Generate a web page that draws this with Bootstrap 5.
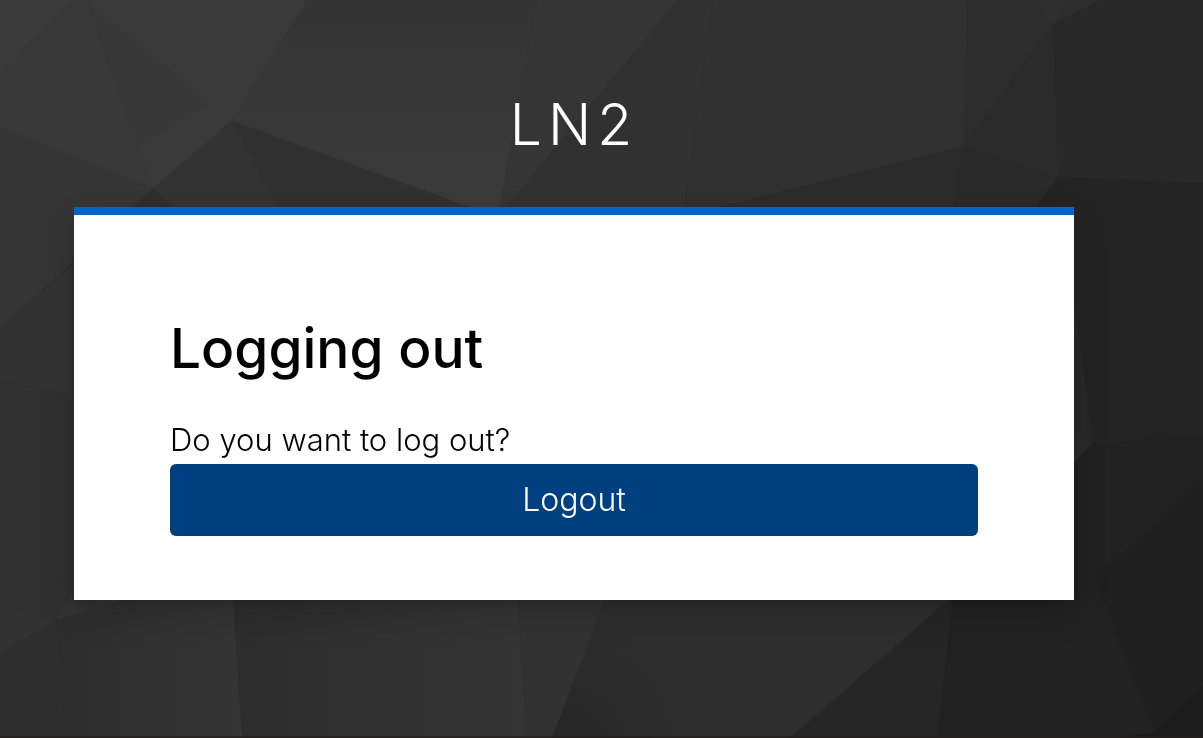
<!DOCTYPE html>
<html lang="en">
<head>
<meta charset="utf-8">
<meta name="viewport" content="width=device-width, initial-scale=1">
<title>Logging out</title>
<link href="https://cdn.jsdelivr.net/npm/bootstrap@5.3.0/dist/css/bootstrap.min.css" rel="stylesheet">
<style>
  body { background: #2a2a2a; font-family: Inter, "Open Sans", sans-serif; }
  .backdrop { z-index: -1; }
  .login-page { padding: 96px 129px 48px 74px; }
  .realm-name { font-size: 57px; font-weight: 300; line-height: 58px; letter-spacing: 6px; margin-bottom: 53px; }
  .login-card { max-width: 1000px; border: 0; border-top: 8px solid #06c; border-radius: 0; color: #000; box-shadow: 0 4px 8px rgba(0,0,0,.1), 0 16px 32px rgba(0,0,0,.16); }
  .login-card .card-body { padding: 97px 96px 64px; }
  .login-title { font-size: 55px; font-weight: 500; line-height: 72px; margin-bottom: 32px; }
  .login-text { font-size: 31px; font-weight: 300; line-height: 48px; }
  .btn-logout { --bs-btn-color: #fff; --bs-btn-bg: #004080; --bs-btn-hover-color: #fff; --bs-btn-hover-bg: #003468; --bs-btn-active-color: #fff; --bs-btn-active-bg: #003468; border: 0; border-radius: 6px; font-size: 32px; font-weight: 300; line-height: 48px; padding: 12px 16px; }
</style>
</head>
<body class="min-vh-100">
<svg class="backdrop position-fixed top-0 start-0 w-100 h-100" viewBox="0 0 1203 738" preserveAspectRatio="xMidYMid slice" aria-hidden="true">
  <defs>
    <linearGradient id="leftFall" x1="0" y1="0" x2="1" y2="0"><stop offset="0" stop-color="#2d2d2d"/><stop offset="1" stop-color="#353535"/></linearGradient>
    <linearGradient id="rise" x1="0" y1="0" x2="0" y2="1"><stop offset="0" stop-color="#343434"/><stop offset="1" stop-color="#3a3a3a"/></linearGradient>
    <radialGradient id="pit" gradientUnits="userSpaceOnUse" cx="572" cy="738" r="120"><stop offset="0" stop-color="#262626"/><stop offset="1" stop-color="#2e2e2e"/></radialGradient>
  </defs>
  <rect width="1203" height="738" fill="#2a2a2a"/>
  <path fill="#3a3a3a" d="M0 0H74L0 72z"/>
  <path fill="#383838" d="M0 72L74 0H87L153 189L0 128z"/>
  <path fill="#393939" d="M87 0H307L232 121L153 189z"/>
  <path fill="#373737" d="M87 0L212 103L138 146z"/>
  <path fill="url(#rise)" d="M307 0H537L500 210H475L232 121z"/>
  <path fill="#353535" d="M537 0H678L504 210H499z"/>
  <path fill="#313131" d="M678 0H713L684 210H504z"/>
  <path fill="#303030" d="M713 0H967L964 146L700 212H684z"/>
  <path fill="#2d2d2d" d="M967 0H1100L1053 24L964 146z"/>
  <path fill="#2f2f2f" d="M1035 0H1068L1053 24z"/>
  <path fill="#2b2b2b" d="M1053 24L1058 177L964 146z"/>
  <path fill="#282828" d="M1100 0H1203V183L1058 177L1053 24z"/>
  <path fill="#353535" d="M0 128L153 189L0 329z"/>
  <path fill="#333" d="M153 189L232 121L280 210H176z"/>
  <path fill="#2e2e2e" d="M130 210L153 189L176 210z"/>
  <path fill="#303030" d="M232 121L478 210H280z"/>
  <path fill="#2b2b2b" d="M700 212L964 146L952 212z"/>
  <path fill="#292929" d="M964 146L1058 177L1034 210H952z"/>
  <path fill="#232323" d="M1034 210L1058 177L1093 443L1060 420z"/>
  <path fill="#242424" d="M1058 177L1203 183V436L1093 443z"/>
  <path fill="#282828" d="M1068 250L1093 443L1068 431z"/>
  <path fill="#212121" d="M1093 443L1203 436V738H1060V477z"/>
  <path fill="#1f1f1f" d="M1203 481L1095 578L1155 732L1203 687z"/>
  <path fill="#323232" d="M0 329L80 257V396L0 380z"/>
  <path fill="#303030" d="M0 380L80 396V580L56 620L0 606z"/>
  <path fill="#323232" d="M0 606L56 620L0 653z"/>
  <path fill="#2e2e2e" d="M0 653L56 620L66 738H0z"/>
  <path fill="url(#leftFall)" d="M56 620L140 596H233L242 738H66z"/>
  <path fill="#333" d="M56 620L80 580V596H140z"/>
  <path fill="url(#leftFall)" d="M233 596H518L526 738H242z"/>
  <path fill="#323232" d="M518 596H606L552 738H526z"/>
  <path fill="url(#pit)" d="M606 596H953L790 738H552z"/>
  <path fill="#262626" d="M953 596H1095L1155 732V738H790z"/>
  <path fill="#212121" d="M953 596H1095L1155 732V738H937z" opacity=".7"/>
  <path fill="#1b1b1b" d="M1203 687L1155 732L1120 738H1203z"/>
  <rect y="736" width="1203" height="2" fill="#231f20" opacity=".7"/>
</svg>
<main class="login-page">
  <header class="realm-name text-white text-center">LN2</header>
  <section class="card login-card mx-auto">
    <div class="card-body">
      <h1 class="login-title">Logging out</h1>
      <form>
        <p class="login-text mb-0">Do you want to log out?</p>
        <button type="submit" class="btn btn-logout w-100 d-block">Logout</button>
      </form>
    </div>
  </section>
</main>
<script src="https://cdn.jsdelivr.net/npm/bootstrap@5.3.0/dist/js/bootstrap.bundle.min.js"></script>
</body>
</html>
